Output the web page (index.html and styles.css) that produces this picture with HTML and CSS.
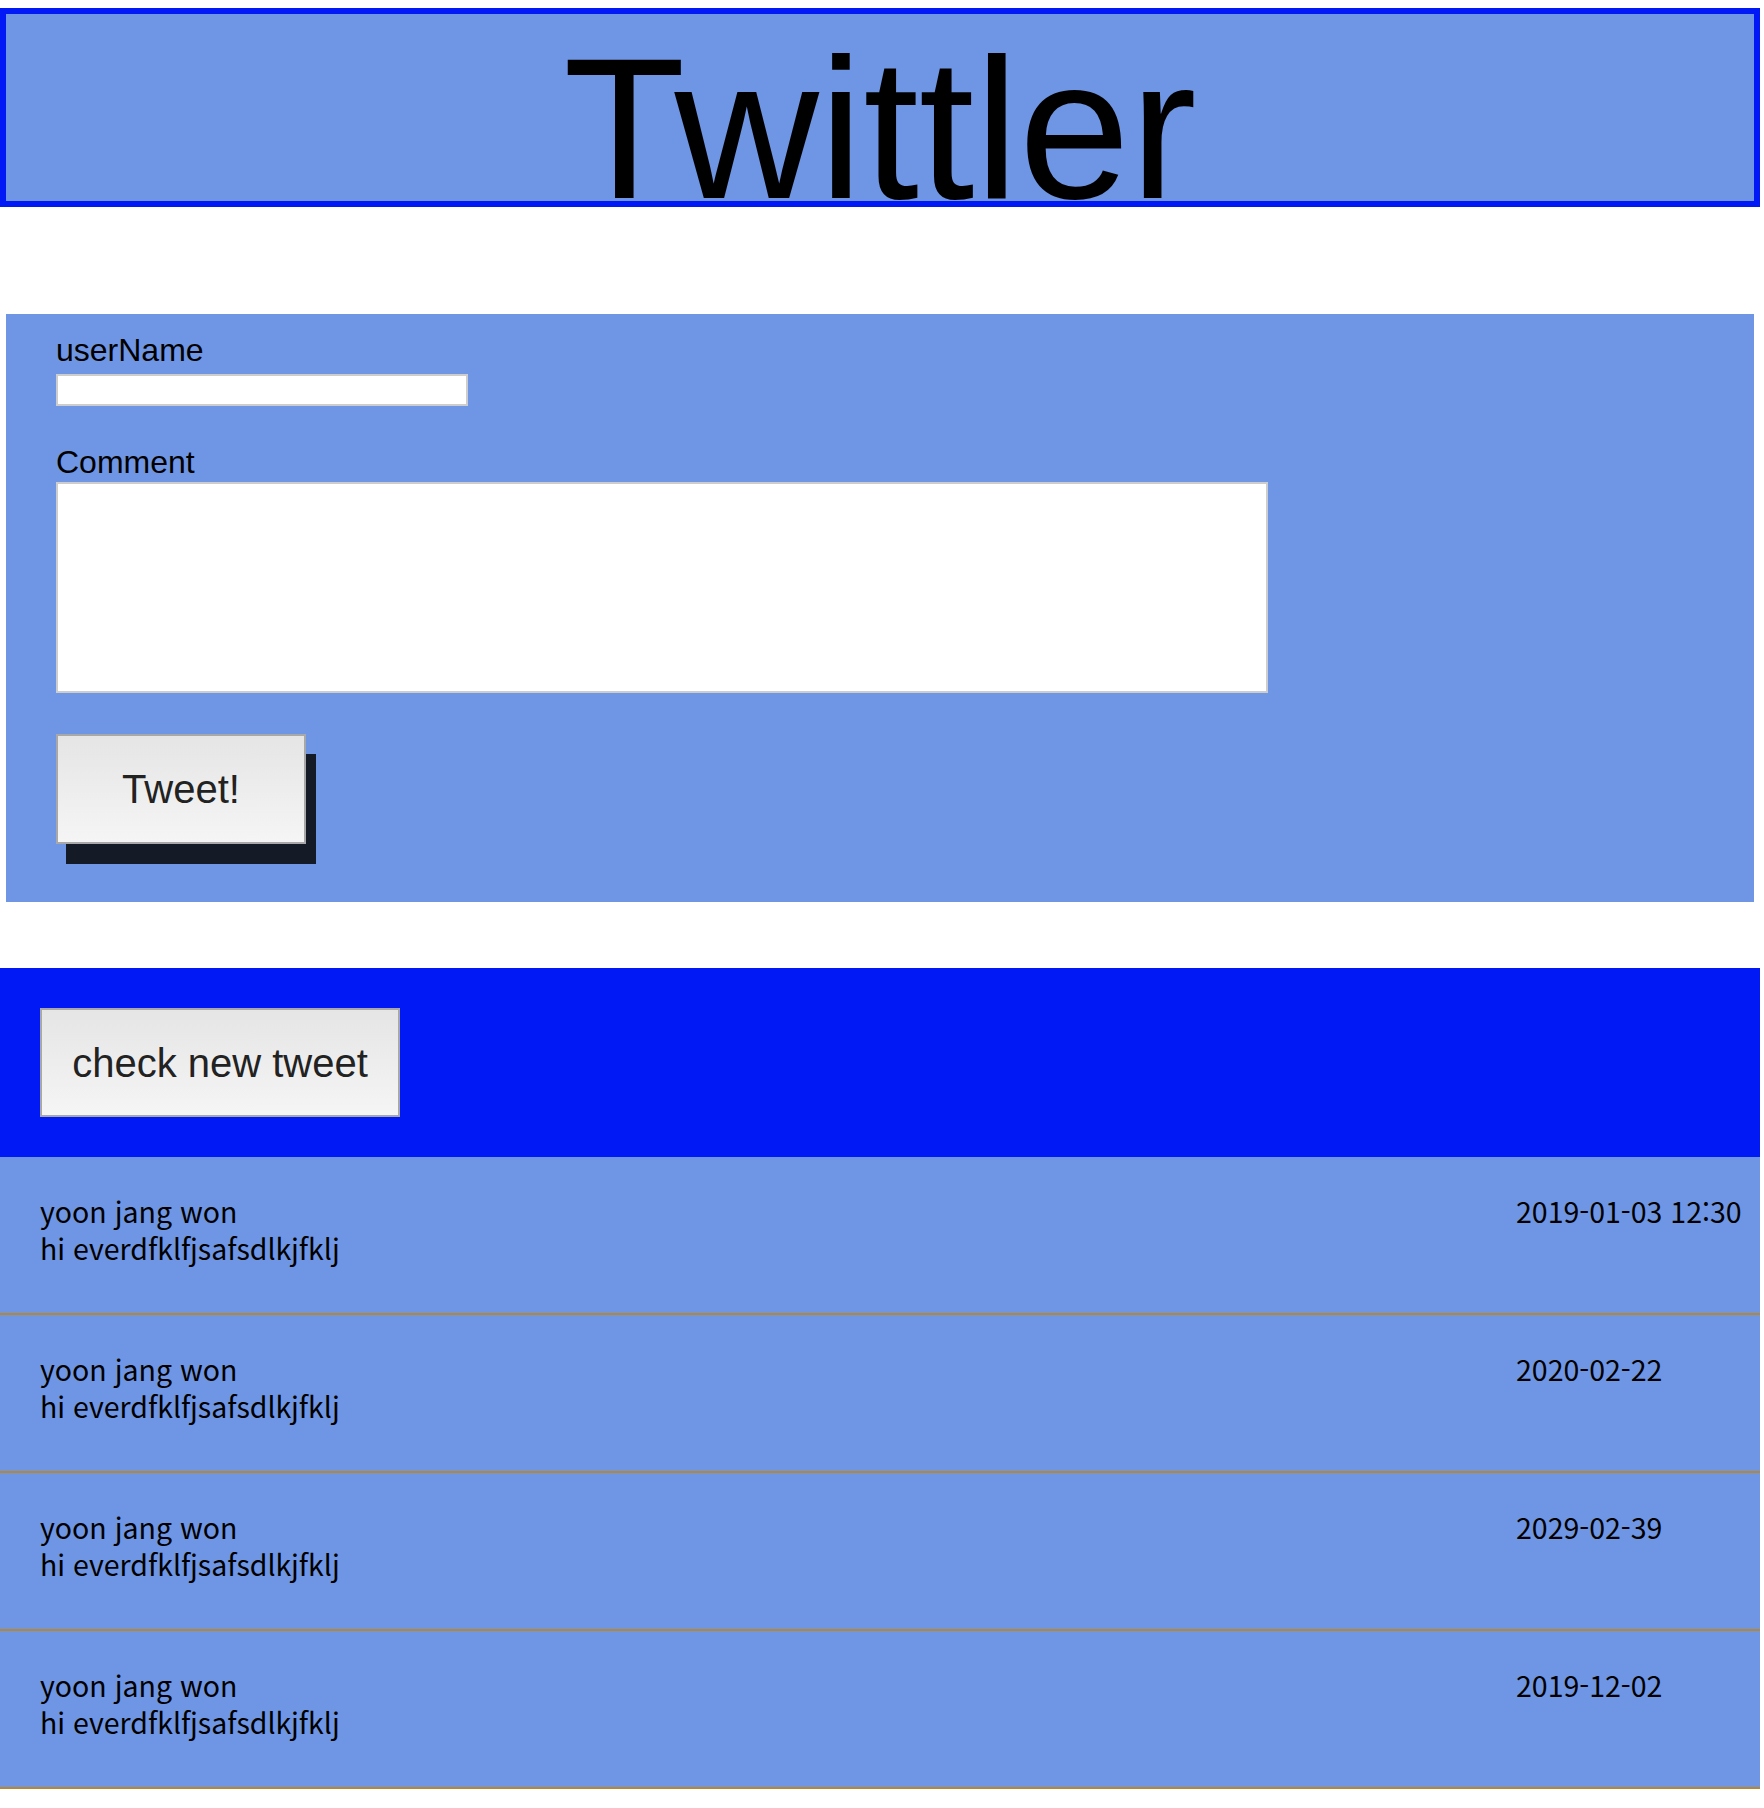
FILE: index.html
```html
<!DOCTYPE html>
<html lang="ko">
<head>
<meta charset="utf-8">
<title>Twittler</title>
<link rel="stylesheet" href="styles.css">
</head>
<body>
<header class="masthead">
  <h1 class="title">Twittler</h1>
</header>
<form class="composer">
  <label class="field-label" for="userName">userName</label>
  <input class="name-input" id="userName" type="text">
  <label class="field-label comment-label" for="comment">Comment</label>
  <textarea class="comment-input" id="comment"></textarea>
  <button class="btn tweet-btn" type="button">Tweet!</button>
</form>
<section class="toolbar">
  <button class="btn check-btn" type="button">check new tweet</button>
</section>
<ul class="feed">
  <li class="tweet">
    <div class="tweet-body">
      <div class="tweet-user">yoon jang won</div>
      <div class="tweet-text">hi everdfklfjsafsdlkjfklj</div>
    </div>
    <div class="tweet-date">2019-01-03 12:30</div>
  </li>
  <li class="tweet">
    <div class="tweet-body">
      <div class="tweet-user">yoon jang won</div>
      <div class="tweet-text">hi everdfklfjsafsdlkjfklj</div>
    </div>
    <div class="tweet-date">2020-02-22</div>
  </li>
  <li class="tweet">
    <div class="tweet-body">
      <div class="tweet-user">yoon jang won</div>
      <div class="tweet-text">hi everdfklfjsafsdlkjfklj</div>
    </div>
    <div class="tweet-date">2029-02-39</div>
  </li>
  <li class="tweet">
    <div class="tweet-body">
      <div class="tweet-user">yoon jang won</div>
      <div class="tweet-text">hi everdfklfjsafsdlkjfklj</div>
    </div>
    <div class="tweet-date">2019-12-02</div>
  </li>
</ul>
</body>
</html>
```
FILE: styles.css
```css
html, body {
  margin: 0;
  padding: 0;
  background: #ffffff;
}
body {
  padding-top: 8px;
  width: 1760px;
  font-family: "Liberation Sans", Arial, sans-serif;
  color: #000;
}
.masthead {
  box-sizing: border-box;
  height: 199px;
  border: 6px solid #0019f5;
  background: #6f96e4;
}
.title {
  margin: 0;
  text-align: center;
  font-family: "Liberation Sans", Arial, sans-serif;
  font-weight: normal;
  font-size: 200px;
  line-height: 230px;
  color: #000;
  white-space: nowrap;
}
.composer {
  box-sizing: border-box;
  margin: 107px 0 0 6px;
  width: 1748px;
  height: 588px;
  padding: 18px 0 0 50px;
  background: #6f96e4;
  display: flex;
  flex-direction: column;
  align-items: flex-start;
}
.field-label {
  font-size: 32px;
  line-height: 37px;
  color: #000;
}
.comment-label {
  margin-top: 38px;
}
.name-input {
  box-sizing: border-box;
  margin: 5px 0 0;
  width: 412px;
  height: 32px;
  border: 2px solid #cdcdcd;
  background: #fff;
  padding: 0;
}
.comment-input {
  box-sizing: border-box;
  margin: 1px 0 0;
  width: 1212px;
  height: 211px;
  border: 2px solid #cdcdcd;
  background: #fff;
  padding: 0;
  resize: none;
}
.btn {
  box-sizing: border-box;
  font-family: "Liberation Sans", Arial, sans-serif;
  font-size: 40px;
  line-height: 46px;
  color: #222;
  border: 2px solid #a8a8a8;
  border-radius: 0;
  background: linear-gradient(#e5e5e5, #f5f5f5);
  padding: 0;
  margin: 0;
}
.tweet-btn {
  margin-top: 41px;
  width: 250px;
  height: 110px;
  box-shadow: 10px 20px 0 #141a26;
}
.toolbar {
  margin-top: 66px;
  background: #0019f5;
  padding: 40px;
}
.check-btn {
  width: 360px;
  height: 109px;
}
.feed {
  list-style: none;
  margin: 0;
  padding: 0;
}
.tweet {
  box-sizing: border-box;
  height: 158px;
  display: flex;
  padding: 35px 0 0 40px;
  background: #6f96e4;
  border-bottom: 2px solid #b8862c;
  font-family: "Noto Sans CJK KR", "Noto Sans", sans-serif;
  font-size: 28.5px;
  line-height: 37px;
  color: #000;
}
.tweet-body {
  flex: 1;
}
.tweet-date {
  width: 244px;
  white-space: nowrap;
}
```
